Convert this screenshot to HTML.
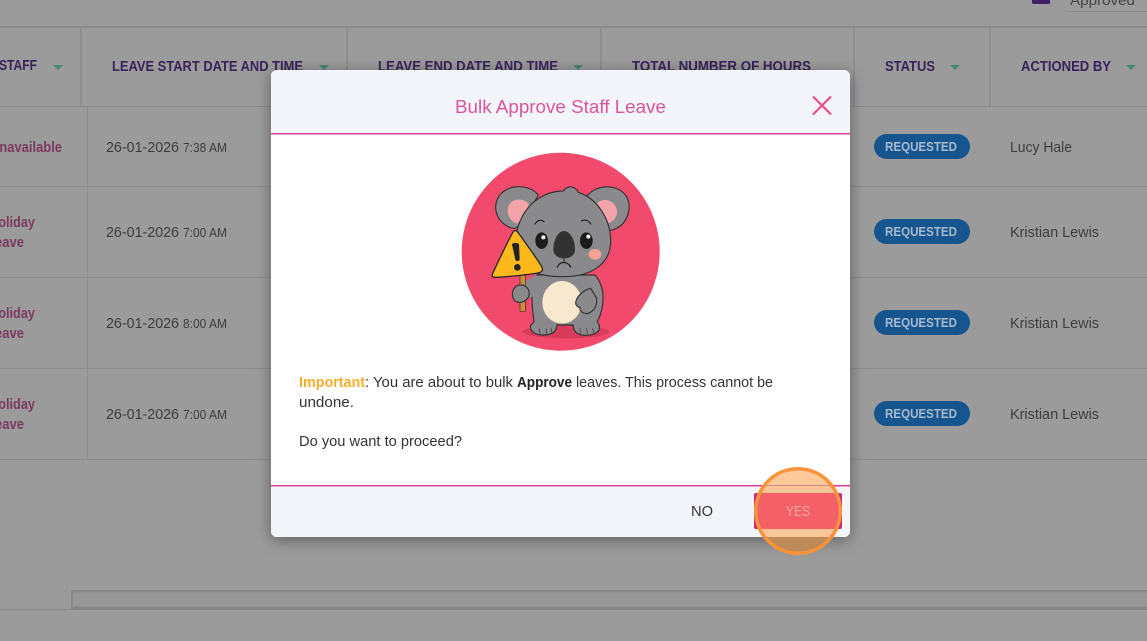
<!DOCTYPE html>
<html><head><meta charset="utf-8"><title>Bulk Approve Staff Leave</title>
<style>
html,body{margin:0;padding:0;background:#9b9b9b;width:1147px;height:641px;overflow:hidden}
svg{display:block;font-family:"Liberation Sans",sans-serif}
.h{font-size:14.5px;font-weight:700;fill:#38225a}
.t{font-size:14.5px;fill:#7c3a60;font-weight:700}
.d{font-size:14.5px;fill:#3d3d3d}
.s{font-size:12.5px;fill:#3d3d3d}
.n{font-size:14.5px;fill:#3d3d3d}
.r{font-size:13px;font-weight:700;fill:#a6bacd}
.m{font-size:14.5px;fill:#333}
</style></head><body>
<svg width="1147" height="641" viewBox="0 0 1147 641" xmlns="http://www.w3.org/2000/svg">
<defs>
<filter id="sh" x="-10%" y="-10%" width="120%" height="120%"><feDropShadow dx="0" dy="3" stdDeviation="8" flood-color="#000" flood-opacity=".4"/></filter>
<filter id="soft"><feGaussianBlur stdDeviation="1"/></filter>
<clipPath id="mc"><rect x="271" y="70" width="579" height="467" rx="6"/></clipPath>
<clipPath id="cc"><circle cx="798" cy="511" r="42"/></clipPath>
</defs>
<rect width="1147" height="641" fill="#9b9b9b"/>
<!-- top right filter -->
<rect x="1032" y="-6" width="18" height="10" rx="1.5" fill="#3e1f68"/>
<text x="1070" y="5" font-size="14" fill="#444" textLength="65" lengthAdjust="spacingAndGlyphs">Approved</text>
<rect x="1069" y="11" width="78" height="1" fill="#8c8c8c"/>
<!-- table header -->
<rect x="0" y="26" width="1147" height="2" fill="#8b8b8b"/>
<rect x="0" y="106" width="1147" height="1" fill="#8b8b8b"/>
<g fill="#8d8d95"><rect x="80" y="27" width="2" height="79"/><rect x="346" y="27" width="2" height="79"/><rect x="600" y="27" width="2" height="79"/><rect x="853" y="27" width="2" height="79"/><rect x="989" y="27" width="2" height="79"/></g>
<text class="h" x="-1" y="70" textLength="38" lengthAdjust="spacingAndGlyphs">STAFF</text>
<text class="h" x="112" y="71" textLength="191" lengthAdjust="spacingAndGlyphs">LEAVE START DATE AND TIME</text>
<text class="h" x="378" y="71" textLength="180" lengthAdjust="spacingAndGlyphs">LEAVE END DATE AND TIME</text>
<text class="h" x="632" y="71" textLength="179" lengthAdjust="spacingAndGlyphs">TOTAL NUMBER OF HOURS</text>
<text class="h" x="885" y="71" textLength="50" lengthAdjust="spacingAndGlyphs">STATUS</text>
<text class="h" x="1021" y="71" textLength="90" lengthAdjust="spacingAndGlyphs">ACTIONED BY</text>
<g fill="#468872"><path d="M53 65h10l-5 5z"/><path d="M319 65h10l-5 5z"/><path d="M573 65h10l-5 5z"/><path d="M950 65h10l-5 5z"/><path d="M1126 65h10l-5 5z"/></g>
<!-- rows -->
<g fill="#8d8d8d"><rect y="186" width="1147" height="1"/><rect y="277" width="1147" height="1"/><rect y="368" width="1147" height="1"/><rect y="459" width="1147" height="1"/></g>
<rect x="87" y="107" width="1" height="352" fill="#8d8d93"/>
<text class="t" x="-10" y="152" textLength="72" lengthAdjust="spacingAndGlyphs">Unavailable</text>
<text class="t" x="-11" y="227" textLength="46" lengthAdjust="spacingAndGlyphs">Holiday</text><text class="t" x="-13" y="247" textLength="37" lengthAdjust="spacingAndGlyphs">Leave</text>
<text class="t" x="-11" y="318" textLength="46" lengthAdjust="spacingAndGlyphs">Holiday</text><text class="t" x="-13" y="338" textLength="37" lengthAdjust="spacingAndGlyphs">Leave</text>
<text class="t" x="-11" y="409" textLength="46" lengthAdjust="spacingAndGlyphs">Holiday</text><text class="t" x="-13" y="429" textLength="37" lengthAdjust="spacingAndGlyphs">Leave</text>
<g>
<text class="d" x="106" y="152" textLength="73" lengthAdjust="spacingAndGlyphs">26-01-2026</text><text class="s" x="183" y="152" textLength="44" lengthAdjust="spacingAndGlyphs">7:38 AM</text>
<text class="d" x="106" y="237" textLength="73" lengthAdjust="spacingAndGlyphs">26-01-2026</text><text class="s" x="183" y="237" textLength="44" lengthAdjust="spacingAndGlyphs">7:00 AM</text>
<text class="d" x="106" y="328" textLength="73" lengthAdjust="spacingAndGlyphs">26-01-2026</text><text class="s" x="183" y="328" textLength="44" lengthAdjust="spacingAndGlyphs">8:00 AM</text>
<text class="d" x="106" y="419" textLength="73" lengthAdjust="spacingAndGlyphs">26-01-2026</text><text class="s" x="183" y="419" textLength="44" lengthAdjust="spacingAndGlyphs">7:00 AM</text>
</g>
<g fill="#17558f"><rect x="874" y="134" width="96" height="25" rx="12.5"/><rect x="874" y="219" width="96" height="25" rx="12.5"/><rect x="874" y="310" width="96" height="25" rx="12.5"/><rect x="874" y="401" width="96" height="25" rx="12.5"/></g>
<text class="r" x="885" y="151" textLength="72" lengthAdjust="spacingAndGlyphs">REQUESTED</text>
<text class="r" x="885" y="236" textLength="72" lengthAdjust="spacingAndGlyphs">REQUESTED</text>
<text class="r" x="885" y="327" textLength="72" lengthAdjust="spacingAndGlyphs">REQUESTED</text>
<text class="r" x="885" y="418" textLength="72" lengthAdjust="spacingAndGlyphs">REQUESTED</text>
<text class="n" x="1010" y="152" textLength="62" lengthAdjust="spacingAndGlyphs">Lucy Hale</text>
<text class="n" x="1010" y="237" textLength="89" lengthAdjust="spacingAndGlyphs">Kristian Lewis</text>
<text class="n" x="1010" y="328" textLength="89" lengthAdjust="spacingAndGlyphs">Kristian Lewis</text>
<text class="n" x="1010" y="419" textLength="89" lengthAdjust="spacingAndGlyphs">Kristian Lewis</text>
<!-- scrollbar -->
<rect x="0" y="609" width="72" height="1" fill="#85858a"/>
<rect x="71" y="590" width="1076" height="20" fill="#979797"/>
<rect x="71" y="590" width="1076" height="2" fill="#888"/>
<rect x="71" y="592" width="1076" height="2" fill="#929292"/>
<rect x="71" y="606" width="1076" height="1" fill="#909090"/>
<rect x="71" y="607" width="1076" height="3" fill="#868686"/>
<rect x="71" y="590" width="2" height="20" fill="#888"/>
<!-- modal -->
<rect x="271" y="70" width="579" height="467" rx="6" fill="#fff" filter="url(#sh)"/>
<g clip-path="url(#mc)">
<rect x="271" y="70" width="579" height="63" fill="#f4f5fa"/>
<rect x="271" y="133" width="579" height="1.500" fill="#d8409a"/>
<rect x="271" y="485" width="579" height="52" fill="#f4f5fa"/>
<rect x="271" y="485" width="579" height="1.500" fill="#d8409a"/>
</g>
<text x="455" y="113" font-size="18.500" fill="#d9559f" textLength="211" lengthAdjust="spacingAndGlyphs">Bulk Approve Staff Leave</text>
<path d="M813 96.500L831 114.500M831 96.500L813 114.500" stroke="#ea4c90" stroke-width="2.200" fill="none"/>
<!-- koala -->
<circle cx="560.700" cy="251.700" r="99" fill="#f24a6c"/>
<svg x="480" y="175" width="170" height="170" viewBox="0 0 510 510">
<g filter="url(#soft)">
<ellipse cx="258" cy="470" rx="130" ry="20" fill="#d83a5c"/>
<g stroke="#333" stroke-width="3.500" stroke-linejoin="round">
<path d="M175 60C150 28 85 25 58 62C38 92 45 135 85 155C100 165 115 160 130 140Z" fill="#8a8a8c"/>
<path d="M322 62C350 28 410 25 438 62C458 95 445 145 405 162C392 170 375 165 360 145Z" fill="#8a8a8c"/>
</g>
<path d="M145 85C120 62 82 75 83 108C84 128 97 142 112 146L150 110Z" fill="#f4a3ab"/>
<path d="M350 85C375 62 412 82 411 112C410 128 398 140 385 144L345 110Z" fill="#f4a3ab"/>
<g stroke="#333" stroke-width="3.500" stroke-linejoin="round">
<path d="M170 300C150 325 155 390 162 440L152 452C148 470 168 480 190 480C215 480 232 470 230 450L280 450C278 470 295 482 320 481C345 480 362 470 358 452L352 440C372 400 380 340 345 300Z" fill="#8a8a8c"/>
<ellipse cx="246" cy="382" rx="59" ry="64" fill="#f8e8d0" stroke="none"/>
<path d="M108 210C104 150 135 95 180 68C205 52 230 48 250 48C262 30 285 32 295 52C350 70 392 130 392 198C392 270 330 305 250 305C170 305 112 285 108 210Z" fill="#8a8a8c"/>
</g>
<path d="M178 460L180 476M198 460L200 478M214 460L216 474M300 460L301 478M320 460L322 478M338 460L341 474" stroke="#333" stroke-width="2" fill="none"/>
<ellipse cx="185" cy="197" rx="19" ry="25" fill="#1e1e1e"/><circle cx="190" cy="187" r="6" fill="#fff"/>
<ellipse cx="319" cy="197" rx="19" ry="25" fill="#1e1e1e"/><circle cx="325" cy="185" r="6" fill="#fff"/>
<path d="M252 168C232 168 220 200 220 222C221 244 238 250 252 250C268 250 285 244 285 222C285 198 272 168 252 168Z" fill="#333"/>
<ellipse cx="345" cy="238" rx="19" ry="16" fill="#f2a396"/>
<path d="M232 276C240 258 262 258 272 276" fill="none" stroke="#222" stroke-width="4" stroke-linecap="round"/>
<path d="M252 250V260" stroke="#222" stroke-width="3"/>
<path d="M165 147C172 135 185 133 192 140M305 138C313 132 325 135 332 147" fill="none" stroke="#222" stroke-width="3.500" stroke-linecap="round"/>
<path d="M170 300C150 305 135 320 120 335L150 370C165 360 172 345 175 330Z" fill="#8a8a8c"/>
<rect x="120" y="300" width="16" height="110" rx="3" fill="#c98f3c" stroke="#3a2a1a" stroke-width="2"/>
<path d="M112 332C95 340 93 365 105 378C120 388 145 378 148 358C148 335 128 325 112 332Z" fill="#8a8a8c" stroke="#333" stroke-width="3.500"/>
<path d="M100 170C92 180 50 270 38 295C33 305 40 308 50 307C85 305 160 298 178 293C188 290 190 282 184 273C170 250 120 180 112 170C108 165 104 165 100 170Z" fill="#fdb91f" stroke="#2a2a2a" stroke-width="4" stroke-linejoin="round"/>
<path d="M96 208C97 202 115 202 117 208L119 252C118 260 108 260 106 254Z" fill="#222"/>
<circle cx="112" cy="277" r="10" fill="#222"/>
<path d="M288 378C292 362 312 345 332 340L350 370C352 395 340 410 322 416C305 415 298 405 300 398C290 395 285 388 288 378Z" fill="#8a8a8c" stroke="#333" stroke-width="3.500" stroke-linejoin="round"/>
</g>
</svg>
<!-- body text -->
<text x="299" y="387" font-size="14.500" font-weight="700" fill="#f8ae2c" textLength="66" lengthAdjust="spacingAndGlyphs">Important</text>
<text class="m" x="365" y="387" textLength="148" lengthAdjust="spacingAndGlyphs">: You are about to bulk</text>
<text class="m" x="517" y="387" font-weight="700" style="fill:#222" textLength="55" lengthAdjust="spacingAndGlyphs">Approve</text>
<text class="m" x="576" y="387" textLength="197" lengthAdjust="spacingAndGlyphs">leaves. This process cannot be</text>
<text class="m" x="299" y="407" textLength="55" lengthAdjust="spacingAndGlyphs">undone.</text>
<text class="m" x="299" y="446" textLength="163" lengthAdjust="spacingAndGlyphs">Do you want to proceed?</text>
<!-- footer -->
<text x="691" y="516" font-size="14.500" fill="#333" textLength="22" lengthAdjust="spacingAndGlyphs">NO</text>
<rect x="754" y="493" width="88" height="36" rx="2" fill="#c9287f"/>
<g clip-path="url(#cc)">
<rect x="750" y="465" width="100" height="21" fill="#fdc89a"/>
<rect x="750" y="485" width="100" height="8" fill="#fcc597"/>
<rect x="750" y="485" width="100" height="1" fill="#d88b80"/>
<rect x="750" y="493" width="100" height="36" fill="#f36068"/>
<rect x="750" y="529" width="100" height="8" fill="#fbc698"/>
<rect x="750" y="537" width="100" height="22" fill="#bd8a58"/>
</g>
<text x="786" y="516" font-size="14.500" fill="#f7a79c" textLength="24" lengthAdjust="spacingAndGlyphs">YES</text>
<circle cx="798" cy="511" r="42.300" fill="none" stroke="#f7943a" stroke-width="3.500"/>
</svg>
</body></html>
